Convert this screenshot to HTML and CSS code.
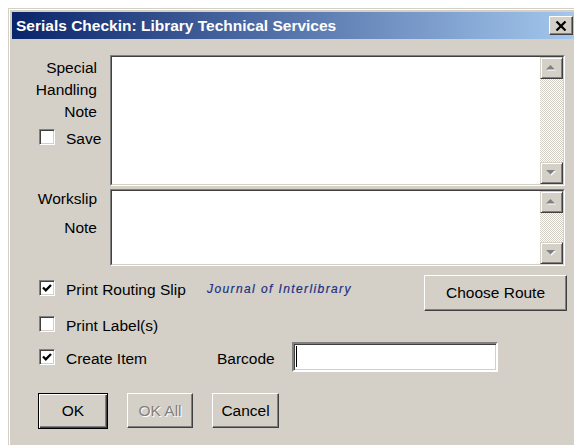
FILE: index.html
```html
<!DOCTYPE html>
<html lang="en">
<head>
<meta charset="utf-8">
<title>Serials Checkin</title>
<link rel="stylesheet" href="styles.css">
</head>
<body>
<div class="window">
  <div class="titlebar">
    <span class="title">Serials Checkin: Library Technical Services</span>
    <button class="close" aria-label="Close">
      <svg width="12" height="10" viewBox="0 0 12 10"><path d="M1.5 0.5 L10.5 9.5 M10.5 0.5 L1.5 9.5" stroke="#000" stroke-width="2.2" fill="none"/></svg>
    </button>
  </div>

  <div class="content">
    <div class="note-row">
      <div class="note-label">
        <div class="label-lines">
          <div>Special</div>
          <div>Handling</div>
          <div>Note</div>
        </div>
        <label class="check save"><span class="box"></span><span class="check-text">Save</span></label>
      </div>
      <div class="field field-special">
        <div class="field-inner">
          <div class="field-text"></div>
          <div class="scrollbar">
            <div class="sb-btn"><svg width="11" height="6" viewBox="0 0 11 6"><polygon points="5.5,1 10,5.5 1,5.5" fill="#fff"/><polygon points="4.5,0 9,4.5 0,4.5" fill="#808080"/></svg></div>
            <div class="sb-track"></div>
            <div class="sb-btn"><svg width="11" height="6" viewBox="0 0 11 6"><polygon points="1,1 10,1 5.5,5.5" fill="#fff"/><polygon points="0,0 9,0 4.5,4.5" fill="#808080"/></svg></div>
          </div>
        </div>
      </div>
    </div>

    <div class="note-row workslip">
      <div class="note-label">
        <div class="label-lines loose">
          <div>Workslip</div>
          <div>Note</div>
        </div>
      </div>
      <div class="field field-workslip">
        <div class="field-inner">
          <div class="field-text"></div>
          <div class="scrollbar">
            <div class="sb-btn"><svg width="11" height="6" viewBox="0 0 11 6"><polygon points="5.5,1 10,5.5 1,5.5" fill="#fff"/><polygon points="4.5,0 9,4.5 0,4.5" fill="#808080"/></svg></div>
            <div class="sb-track"></div>
            <div class="sb-btn"><svg width="11" height="6" viewBox="0 0 11 6"><polygon points="1,1 10,1 5.5,5.5" fill="#fff"/><polygon points="0,0 9,0 4.5,4.5" fill="#808080"/></svg></div>
          </div>
        </div>
      </div>
    </div>

    <div class="options">
      <div class="opt-row row-routing">
        <label class="check opt-col"><span class="box checked"><svg width="12" height="12" viewBox="0 0 12 12"><polyline points="2,5.5 4.8,8.3 10,3" stroke="#000" stroke-width="2.3" fill="none"/></svg></span><span class="check-text">Print Routing Slip</span></label>
        <span class="journal">Journal of Interlibrary</span>
        <button class="btn choose">Choose Route</button>
      </div>
      <div class="opt-row row-label">
        <label class="check opt-col"><span class="box"></span><span class="check-text">Print Label(s)</span></label>
      </div>
      <div class="opt-row row-item">
        <label class="check opt-col"><span class="box checked"><svg width="12" height="12" viewBox="0 0 12 12"><polyline points="2,5.5 4.8,8.3 10,3" stroke="#000" stroke-width="2.3" fill="none"/></svg></span><span class="check-text">Create Item</span></label>
        <span class="barcode-label">Barcode</span>
        <div class="input"><span class="caret"></span></div>
      </div>
    </div>

    <div class="actions">
      <button class="btn default ok">OK</button>
      <button class="btn disabled okall" disabled>OK All</button>
      <button class="btn cancel">Cancel</button>
    </div>
  </div>
</div>
</body>
</html>
```
FILE: styles.css
```css
* { box-sizing: border-box; }

html, body {
  margin: 0;
  background: #fff;
  overflow: hidden;
}

body {
  width: 574px;
  height: 445px;
  font-family: "Liberation Sans", Arial, sans-serif;
  font-size: 15.5px;
  color: #000;
}

button {
  font: inherit;
  color: inherit;
  padding: 0;
  margin: 0;
}

/* classic dialog frame; the right and bottom edges run past the viewport */
.window {
  margin: 8px 0 0 8px;
  width: 580px;
  height: 437px;
  overflow: hidden;
  background: #d4d0c8;
  border: 1px solid #d4d0c8;
  border-bottom: 0;
  box-shadow: inset 1px 1px #fff;
  padding: 3px 3px 0;
}

.titlebar {
  height: 27px;
  display: flex;
  align-items: center;
  padding-left: 4px;
  background: linear-gradient(to right, #0a246a, #a6caf0);
}

.title {
  color: #fff;
  font-weight: bold;
  font-size: 15.5px;
  line-height: 27px;
  white-space: nowrap;
}

.close {
  margin-left: auto;
  margin-right: 11px;
  width: 24px;
  height: 19px;
  background: #d4d0c8;
  border: 1px solid;
  border-color: #fff #404040 #404040 #fff;
  box-shadow: inset -1px -1px #808080;
  display: flex;
  align-items: center;
  justify-content: center;
}

.content {
  padding-top: 16px;
}

/* note fields */
.note-row {
  display: grid;
  grid-template-columns: 85px 455px;
  column-gap: 13px;
}

.note-row.workslip {
  margin-top: 3px;
}

.note-label {
  display: flex;
  flex-direction: column;
}

.label-lines {
  text-align: right;
  line-height: 22px;
  padding-top: 2px;
}

.label-lines.loose {
  line-height: 29px;
  padding-top: 0;
  margin-top: -5px;
}

.check.save {
  margin-top: 6px;
  margin-left: 26px;
}

.field {
  border: 1px solid;
  border-color: #808080 #fff #fff #808080;
}

.field-inner {
  height: 100%;
  display: flex;
  background: #fff;
  border: 1px solid;
  border-color: #404040 #d4d0c8 #d4d0c8 #404040;
}

.field-special { height: 131px; }
.field-workslip { height: 77px; }

.field-text { flex: 1; }

.scrollbar {
  width: 23px;
  display: flex;
  flex-direction: column;
}

.sb-btn {
  height: 22px;
  flex: none;
  background: #d4d0c8;
  border: 1px solid;
  border-color: #d4d0c8 #404040 #404040 #d4d0c8;
  box-shadow: inset 1px 1px #fff, inset -1px -1px #808080;
  display: flex;
  align-items: center;
  justify-content: center;
}

.sb-track {
  flex: 1;
  background: repeating-conic-gradient(#d4d0c8 0 25%, #fff 0 50%) 0 0 / 2px 2px;
}

/* checkboxes */
.check {
  display: flex;
  align-items: flex-start;
  line-height: 16px;
  white-space: nowrap;
}

.box {
  flex: none;
  width: 16px;
  height: 16px;
  margin-left: 1px;
  margin-right: 11px;
  background: #fff;
  border: 1px solid;
  border-color: #808080 #fff #fff #808080;
  box-shadow: inset 1px 1px #404040, inset -1px -1px #d4d0c8;
  display: flex;
  align-items: center;
  justify-content: center;
}

.check-text {
  padding-top: 2px;
}

/* options */
.options {
  padding-left: 26px;
}

.opt-row {
  display: flex;
  align-items: flex-start;
}

.opt-col { width: 169px; }

.row-routing {
  margin-top: 9px;
  height: 36px;
}

.row-routing .check { margin-top: 5px; }

.journal {
  margin-top: 7px;
  font-size: 12px;
  line-height: 14px;
  font-style: italic;
  letter-spacing: 1.4px;
  color: #1b2f82;
  -webkit-text-stroke: 0.2px #1b2f82;
  white-space: nowrap;
}

.row-label {
  margin-top: 5px;
  height: 16px;
}

.row-item {
  margin-top: 10px;
  height: 30px;
}

.row-item .check { margin-top: 7px; }

.barcode-label {
  margin: 7px 17px 0 10px;
  line-height: 16px;
  padding-top: 2px;
}

.input {
  width: 206px;
  height: 30px;
  background: #fff;
  border: 2px solid;
  border-color: #808080 #fff #fff #808080;
  box-shadow: inset 1px 1px #404040, inset -1px -1px #d4d0c8;
  padding: 2px 0 0 2px;
}

.caret {
  display: block;
  width: 1px;
  height: 21px;
  background: #000;
}

/* push buttons */
.btn {
  background: #d4d0c8;
  border: 1px solid;
  border-color: #fff #404040 #404040 #fff;
  box-shadow: inset -1px -1px #808080;
  display: flex;
  align-items: center;
  justify-content: center;
  white-space: nowrap;
}

.btn.choose {
  margin-left: auto;
  margin-right: 17px;
  width: 143px;
  height: 36px;
}

.btn.default {
  border: 1px solid #000;
  box-shadow: inset 1px 1px #fff, inset -1px -1px #404040, inset -2px -2px #808080;
}

.btn.disabled {
  color: #808080;
  text-shadow: 1px 1px #fff;
}

.actions {
  display: flex;
  align-items: flex-start;
  gap: 19px;
  margin-top: 21px;
  padding-left: 26px;
}

.ok { width: 70px; height: 36px; }
.okall { width: 66px; height: 35px; }
.cancel { width: 67px; height: 35px; }
```
